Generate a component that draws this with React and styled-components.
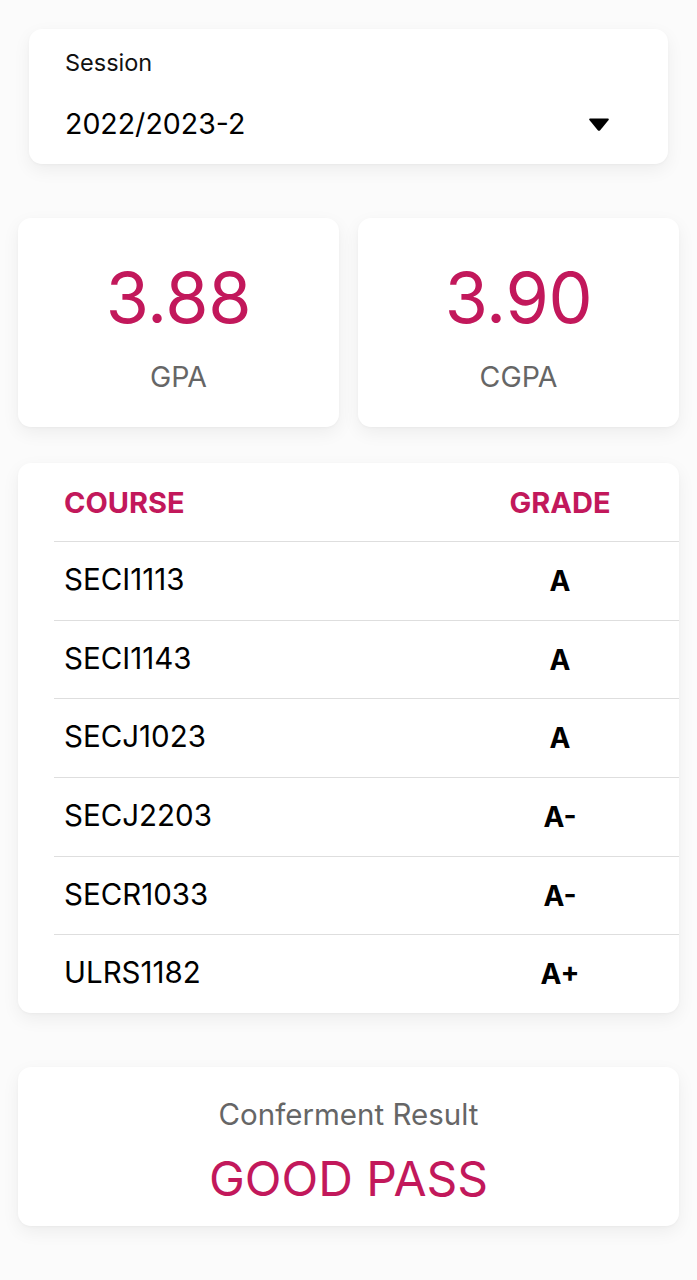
import React from "react";
import styled, { createGlobalStyle } from "styled-components";

const PINK = "#c2185b";

const courses = [
  { code: "SECI1113", grade: "A" },
  { code: "SECI1143", grade: "A" },
  { code: "SECJ1023", grade: "A" },
  { code: "SECJ2203", grade: "A-" },
  { code: "SECR1033", grade: "A-" },
  { code: "ULRS1182", grade: "A+" },
];

const App = () => {
  return (
    <>
      <GlobalStyle />
      <Page>
        <SessionCard>
          <SessionLabel>Session</SessionLabel>
          <SessionRow>
            <SessionValue>2022/2023-2</SessionValue>
            <svg width="22" height="15" viewBox="0 0 22 15">
              <path d="M2 1.5 H20 Q21.5 1.5 20.6 3 L12.2 13.2 Q11 14.5 9.8 13.2 L1.4 3 Q0.5 1.5 2 1.5 Z" fill="#000" />
            </svg>
          </SessionRow>
        </SessionCard>

        <StatsRow>
          <StatCard>
            <StatValue>3.88</StatValue>
            <StatLabel>GPA</StatLabel>
          </StatCard>
          <StatCard>
            <StatValue>3.90</StatValue>
            <StatLabel>CGPA</StatLabel>
          </StatCard>
        </StatsRow>

        <TableCard>
          <Row header>
            <HeadCell>COURSE</HeadCell>
            <HeadCell grade>GRADE</HeadCell>
          </Row>
          {courses.map((c) => (
            <Row key={c.code}>
              <CourseCell>{c.code}</CourseCell>
              <GradeCell>{c.grade}</GradeCell>
            </Row>
          ))}
        </TableCard>

        <ResultCard>
          <ResultLabel>Conferment Result</ResultLabel>
          <ResultValue>GOOD PASS</ResultValue>
        </ResultCard>
      </Page>
    </>
  );
};

const GlobalStyle = createGlobalStyle`
  body {
    margin: 0;
    background: #fbfbfb;
    font-family: Inter, "Noto Sans", sans-serif;
    -webkit-font-smoothing: antialiased;
  }
`;

const Page = styled.div`
  width: 697px;
  height: 1280px;
  box-sizing: border-box;
  padding: 29px 18px 0;
  display: flex;
  flex-direction: column;
`;

const Card = styled.div`
  background: #fff;
  border-radius: 13px;
  box-shadow: 0 6px 18px rgba(0, 0, 0, 0.06), 0 1px 3px rgba(0, 0, 0, 0.03);
`;

const SessionCard = styled(Card)`
  margin: 0 11px;
  height: 135px;
  box-sizing: border-box;
  padding: 19px 58px 0 36px;
`;

const SessionLabel = styled.div`
  font-size: 23.5px;
  color: #111;
  line-height: 30px;
`;

const SessionRow = styled.div`
  display: flex;
  align-items: center;
  justify-content: space-between;
  margin-top: 27px;
`;

const SessionValue = styled.div`
  font-size: 28.5px;
  color: #000;
  line-height: 38px;
`;

const StatsRow = styled.div`
  display: grid;
  grid-template-columns: 1fr 1fr;
  gap: 19px;
  margin-top: 54px;
`;

const StatCard = styled(Card)`
  height: 209px;
  display: flex;
  flex-direction: column;
  align-items: center;
  padding-top: 40px;
  box-sizing: border-box;
`;

const StatValue = styled.div`
  font-size: 70px;
  color: ${PINK};
  line-height: 80px;
  letter-spacing: -0.3px;
`;

const StatLabel = styled.div`
  font-size: 28.5px;
  color: #666;
  margin-top: 21px;
`;

const TableCard = styled(Card)`
  margin-top: 36px;
  height: 550px;
  padding-left: 36px;
  overflow: hidden;
`;

const Row = styled.div`
  display: grid;
  grid-template-columns: 1fr 140px;
  padding-right: 49px;
  height: ${(p) => (p.header ? "78px" : "78.7px")};
  align-items: center;
  border-top: ${(p) => (p.header ? "none" : "1px solid #dedede")};
  box-sizing: border-box;
`;

const HeadCell = styled.div`
  font-size: 29px;
  font-weight: 700;
  color: ${PINK};
  padding-left: ${(p) => (p.grade ? "0" : "10px")};
  text-align: ${(p) => (p.grade ? "center" : "left")};
`;

const CourseCell = styled.div`
  font-size: 29.5px;
  color: #000;
  padding-left: 10px;
  margin-top: -4px;
`;

const GradeCell = styled.div`
  font-size: 28px;
  font-weight: 700;
  color: #000;
  text-align: center;
`;

const ResultCard = styled(Card)`
  margin-top: 54px;
  height: 159px;
  display: flex;
  flex-direction: column;
  align-items: center;
  padding-top: 28px;
  box-sizing: border-box;
`;

const ResultLabel = styled.div`
  font-size: 29.5px;
  color: #666;
  line-height: 38px;
`;

const ResultValue = styled.div`
  font-size: 48px;
  color: ${PINK};
  line-height: 58px;
  margin-top: 17px;
`;

export default App;
